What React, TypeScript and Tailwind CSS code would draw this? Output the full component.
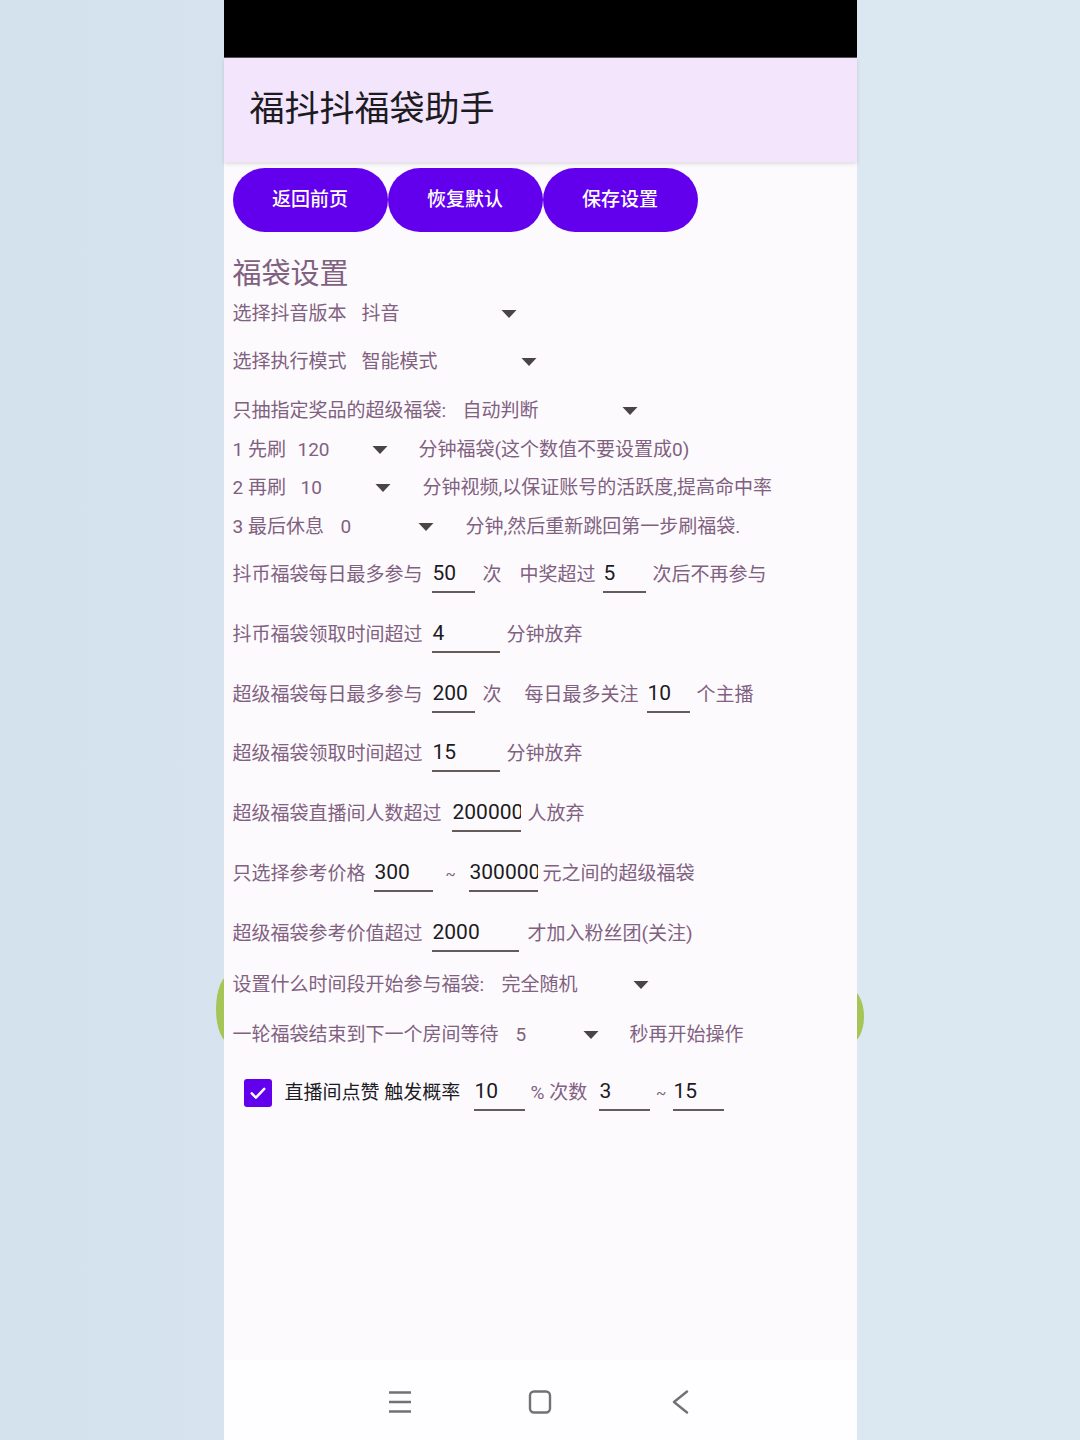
import React from "react";

const Arrow = () => (
  <svg width="16" height="8" viewBox="0 0 16 8" className="shrink-0">
    <path d="M0.5 0H15.5L8 8Z" fill="#4a4545" />
  </svg>
);

const Field = ({ w, v }: { w: string; v: string }) => (
  <span
    className={
      "flex h-[35px] shrink-0 items-center self-center overflow-hidden border-b-2 border-[#645b5b] pl-[1px] text-[21px] text-[#1c1b1f] " +
      w
    }
  >
    {v}
  </span>
);

const Row = ({ mt, children }: { mt: string; children: React.ReactNode }) => (
  <div className={"flex h-[38px] items-center whitespace-nowrap " + mt}>{children}</div>
);

export default function App() {
  return (
    <div className="relative flex h-[1440px] w-[1080px] justify-center overflow-hidden bg-gradient-to-r from-[#d4e2ee] via-[#d9e6f0] to-[#dce8f1] font-['Roboto','Noto_Sans_CJK_SC',sans-serif]">
      <div className="absolute left-[216px] top-[974px] h-[70px] w-[30px] rounded-[50%] bg-[#a6c557]" />
      <div className="absolute left-[834px] top-[989px] h-[55px] w-[30px] rounded-[50%] bg-[#a6c557]" />

      <div className="relative z-10 flex h-[1440px] w-[633px] flex-col bg-[#fdfafe]">
        <div className="h-[58px] shrink-0 border-b border-[#555] bg-black" />
        <div className="flex h-[104px] shrink-0 items-center bg-[#f3e6fc] pl-[26px] shadow-[0_2px_4px_rgba(0,0,0,0.12)]">
          <span className="text-[35px] font-normal text-[#1c1b1f]">福抖抖福袋助手</span>
        </div>

        <div className="flex flex-1 flex-col pl-[9px] text-[19px] text-[#80617f]">
          <div className="mt-[6px] flex">
            <button className="flex h-[64px] w-[155px] items-center justify-center rounded-full bg-[#6200ee] text-[19px] font-medium text-white">
              返回前页
            </button>
            <button className="flex h-[64px] w-[155px] items-center justify-center rounded-full bg-[#6200ee] text-[19px] font-medium text-white">
              恢复默认
            </button>
            <button className="flex h-[64px] w-[155px] items-center justify-center rounded-full bg-[#6200ee] text-[19px] font-medium text-white">
              保存设置
            </button>
          </div>

          <div className="mt-[24px] flex h-[38px] items-center text-[29px] text-[#80617f]">福袋设置</div>

          <Row mt="mt-[1px]">
            <span className="w-[129px] shrink-0">选择抖音版本</span>
            <span className="w-[139px] shrink-0">抖音</span>
            <Arrow />
          </Row>
          <Row mt="mt-[10px]">
            <span className="w-[129px] shrink-0">选择执行模式</span>
            <span className="w-[159px] shrink-0">智能模式</span>
            <Arrow />
          </Row>
          <Row mt="mt-[11px]">
            <span className="w-[230px] shrink-0">只抽指定奖品的超级福袋:</span>
            <span className="w-[159px] shrink-0">自动判断</span>
            <Arrow />
          </Row>
          <Row mt="mt-[1px]">
            <span className="w-[65px] shrink-0">1 先刷</span>
            <span className="w-[74px] shrink-0">120</span>
            <span className="flex w-[47px] shrink-0">
              <Arrow />
            </span>
            <span>分钟福袋(这个数值不要设置成0)</span>
          </Row>
          <Row mt="mt-[0px]">
            <span className="w-[68px] shrink-0">2 再刷</span>
            <span className="w-[74px] shrink-0">10</span>
            <span className="flex w-[48px] shrink-0">
              <Arrow />
            </span>
            <span>分钟视频,以保证账号的活跃度,提高命中率</span>
          </Row>
          <Row mt="mt-[1px]">
            <span className="w-[108px] shrink-0">3 最后休息</span>
            <span className="w-[77px] shrink-0">0</span>
            <span className="flex w-[48px] shrink-0">
              <Arrow />
            </span>
            <span>分钟,然后重新跳回第一步刷福袋.</span>
          </Row>

          <Row mt="mt-[10px]">
            <span className="w-[199px] shrink-0">抖币福袋每日最多参与</span>
            <Field w="w-[43px]" v="50" />
            <span className="ml-[8px] w-[37px] shrink-0">次</span>
            <span className="w-[83px] shrink-0">中奖超过</span>
            <Field w="w-[43px]" v="5" />
            <span className="ml-[7px]">次后不再参与</span>
          </Row>
          <Row mt="mt-[22px]">
            <span className="w-[199px] shrink-0">抖币福袋领取时间超过</span>
            <Field w="w-[68px]" v="4" />
            <span className="ml-[7px]">分钟放弃</span>
          </Row>
          <Row mt="mt-[22px]">
            <span className="w-[199px] shrink-0">超级福袋每日最多参与</span>
            <Field w="w-[43px]" v="200" />
            <span className="ml-[8px] w-[42px] shrink-0">次</span>
            <span className="w-[122px] shrink-0">每日最多关注</span>
            <Field w="w-[43px]" v="10" />
            <span className="ml-[7px]">个主播</span>
          </Row>
          <Row mt="mt-[21px]">
            <span className="w-[199px] shrink-0">超级福袋领取时间超过</span>
            <Field w="w-[68px]" v="15" />
            <span className="ml-[7px]">分钟放弃</span>
          </Row>
          <Row mt="mt-[22px]">
            <span className="w-[219px] shrink-0">超级福袋直播间人数超过</span>
            <Field w="w-[69px]" v="200000" />
            <span className="ml-[7px]">人放弃</span>
          </Row>
          <Row mt="mt-[22px]">
            <span className="w-[141px] shrink-0">只选择参考价格</span>
            <Field w="w-[59px]" v="300" />
            <span className="w-[36px] shrink-0 text-center text-[15px]">~</span>
            <Field w="w-[69px]" v="300000" />
            <span className="ml-[5px]">元之间的超级福袋</span>
          </Row>
          <Row mt="mt-[22px]">
            <span className="w-[199px] shrink-0">超级福袋参考价值超过</span>
            <Field w="w-[87px]" v="2000" />
            <span className="ml-[9px]">才加入粉丝团(关注)</span>
          </Row>
          <Row mt="mt-[13px]">
            <span className="w-[269px] shrink-0">设置什么时间段开始参与福袋:</span>
            <span className="w-[131px] shrink-0">完全随机</span>
            <Arrow />
          </Row>
          <Row mt="mt-[12px]">
            <span className="w-[283px] shrink-0">一轮福袋结束到下一个房间等待</span>
            <span className="w-[67px] shrink-0">5</span>
            <span className="flex w-[47px] shrink-0">
              <Arrow />
            </span>
            <span>秒再开始操作</span>
          </Row>
          <Row mt="mt-[20px]">
            <span className="ml-[11px] flex h-[28px] w-[28px] shrink-0 items-center justify-center rounded-[3px] bg-[#6200ee]">
              <svg width="20" height="20" viewBox="0 0 24 24">
                <path d="M4.5 12.5L9.5 17.5L19.5 7" fill="none" stroke="white" strokeWidth="3" strokeLinecap="round" strokeLinejoin="round" />
              </svg>
            </span>
            <span className="ml-[13px] w-[189px] shrink-0 text-[#1c1b1f]">直播间点赞 触发概率</span>
            <Field w="w-[51px]" v="10" />
            <span className="ml-[6px] w-[68px] shrink-0">% 次数</span>
            <Field w="w-[51px]" v="3" />
            <span className="w-[23px] shrink-0 text-center text-[15px]">~</span>
            <Field w="w-[51px]" v="15" />
          </Row>
        </div>

        <div className="flex h-[80px] shrink-0 justify-center gap-[116px] bg-[#fefdff] pt-[30px]">
          <svg width="24" height="24" viewBox="0 0 24 24">
            <path d="M1 2.5H23M1 12H23M1 21.5H23" stroke="#727272" strokeWidth="2.6" />
          </svg>
          <svg width="24" height="24" viewBox="0 0 24 24">
            <rect x="2" y="1.5" width="20" height="21" rx="4" fill="none" stroke="#727272" strokeWidth="2.4" />
          </svg>
          <svg width="24" height="24" viewBox="0 0 24 24">
            <path d="M19 1.5L6 12L19 22.5" fill="none" stroke="#727272" strokeWidth="2.4" strokeLinecap="round" strokeLinejoin="round" />
          </svg>
        </div>
      </div>
    </div>
  );
}
